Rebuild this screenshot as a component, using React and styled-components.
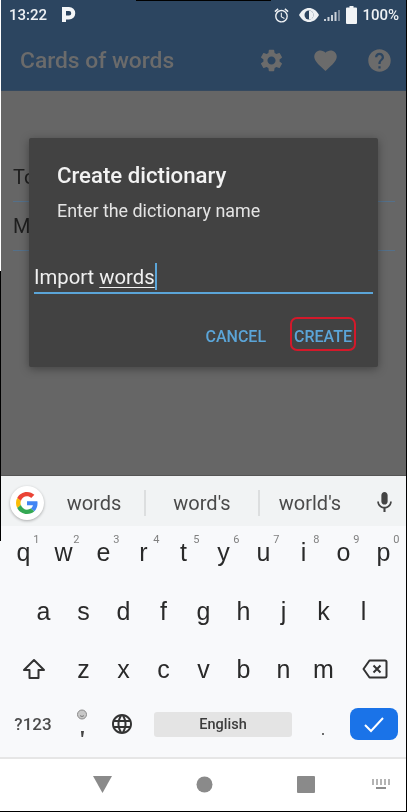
import React from 'react'
import styled, { createGlobalStyle } from 'styled-components'
import { MdSettings, MdFavorite, MdHelp, MdMic, MdLanguage, MdAccessAlarm } from 'react-icons/md'

const Global = createGlobalStyle`
    html, body {
        margin: 0;
        padding: 0;
        background: #ffffff;
    }
    body {
        font-family: Roboto, "Liberation Sans", sans-serif;
    }
`;

const Screen = styled.div`
    position: relative;
    width: 407px;
    height: 812px;
    display: flex;
    flex-direction: column;
    overflow: hidden;
    filter: blur(.45px);
`;

// scraps of the screenshot's frame, they sit over the page edges
const TopScrap = styled.div`
    position: absolute;
    top: 0;
    left: 136px;
    width: 135px;
    height: 1px;
    background: #000000;
`;

const LeftScrap = styled.div`
    position: absolute;
    top: ${p => p.$top}px;
    left: 0;
    width: 1px;
    height: ${p => p.$h}px;
    background: ${p => p.$color};
    z-index: 3;
`;

const RightScrap = styled.div`
    position: absolute;
    top: 0;
    right: 0;
    width: 1px;
    height: 100%;
    background: #000000;
    z-index: 3;
`;

const Header = styled.header`
    background: #2c4560;
    height: 91px;
    flex-shrink: 0;
    display: flex;
    flex-direction: column;
    border-bottom: 1px solid #35495f;
    box-sizing: border-box;
`;

const StatusBar = styled.div`
    height: 30px;
    display: flex;
    align-items: center;
    padding: 0 8px 0 9px;
    color: #eef1f4;
    font-size: 15px;
    font-weight: 500;
`;

const StatusLeft = styled.div`
    display: flex;
    align-items: center;
    gap: 14px;
    flex: 1;
`;

const StatusRight = styled.div`
    display: flex;
    align-items: center;
    gap: 5px;
`;

const AlarmSlot = styled.div`
    display: flex;
    margin-right: 4px;
`;

const ToolBar = styled.div`
    flex: 1;
    display: flex;
    align-items: center;
    padding: 0 14px 0 20px;
    color: #6b6b6b;
`;

const Title = styled.div`
    flex: 1;
    font-size: 22.8px;
    font-weight: 500;
`;

const ToolIcons = styled.div`
    display: flex;
    align-items: center;
    gap: 27px;
    font-size: 27px;
    svg { display: block; }
`;

const Content = styled.main`
    position: relative;
    flex: 1;
    background: #666666;
    padding: 74px 12px 0 13px;
    border-bottom: 1px solid #555555;
`;

const Row = styled.div`
    height: 36px;
    margin-bottom: 12px;
    border-bottom: 1px solid #54708a;
    color: #1e1e1e;
    font-size: 20px;
    line-height: 24px;
`;

const Dialog = styled.div`
    position: absolute;
    top: 47px;
    left: 29px;
    width: 349px;
    height: 229px;
    box-sizing: border-box;
    background: #424242;
    border-radius: 2px;
    box-shadow: 0 2px 10px rgba(0, 0, 0, .35);
    display: flex;
    flex-direction: column;
    padding: 24px 5px 0;
`;

const DialogTitle = styled.div`
    margin-left: 23px;
    color: #f2f2f2;
    font-size: 22.2px;
    font-weight: 500;
    line-height: 26px;
`;

const DialogText = styled.div`
    margin: 13px 0 0 23px;
    color: #e4e4e4;
    font-size: 17.9px;
    line-height: 20px;
`;

const Field = styled.div`
    margin-top: 36px;
    height: 29px;
    padding-top: 6px;
    border-bottom: 2px solid #5ba5d8;
    color: #f0f0f0;
    font-size: 20.3px;
    line-height: 29px;
    display: flex;
    align-items: flex-start;
`;

const Word = styled.span`
    text-decoration: underline;
    text-underline-offset: 3px;
    text-decoration-thickness: 1px;
`;

const Caret = styled.span`
    width: 2px;
    height: 27px;
    background: #5ba5d8;
`;

const Actions = styled.div`
    margin-top: 23px;
    display: flex;
    justify-content: flex-end;
    align-items: center;
    gap: 24px;
    padding-right: 17px;
`;

const Action = styled.button`
    background: none;
    border: none;
    padding: 6px 0 0;
    color: #5ba5d8;
    font-family: inherit;
    font-size: 16px;
    font-weight: 500;
    line-height: 24px;
`;

const Marked = styled.div`
    border: 2px solid #d3192a;
    border-radius: 7px;
    padding: 0 2px;
    display: flex;
`;

const Keyboard = styled.section`
    flex-shrink: 0;
    background: #f8f9fb;
    border-bottom: 2px solid #e6e6e6;
    padding-bottom: 7px;
`;

const Suggestions = styled.div`
    height: 47px;
    padding: 3px 10px 0;
    background: #f1f3f4;
    display: flex;
    align-items: center;
    color: #4a4a4a;
    font-size: 20px;
`;

const GoogleBadge = styled.div`
    width: 34px;
    height: 34px;
    flex-shrink: 0;
    border-radius: 50%;
    background: #ffffff;
    box-shadow: 0 1px 3px rgba(0, 0, 0, .3);
    display: flex;
    align-items: center;
    justify-content: center;
`;

const Suggestion = styled.div`
    width: ${p => p.$w}px;
    text-align: center;
    border-right: ${p => p.$last ? 'none' : '2px solid #dcdedf'};
    line-height: 26px;
`;

const Mic = styled.div`
    margin-left: auto;
    font-size: 25px;
    display: flex;
    color: #444444;
`;

const KeyRow = styled.div`
    box-sizing: border-box;
    display: flex;
    justify-content: ${p => p.$start ? 'flex-start' : 'center'};
    align-items: center;
    height: ${p => p.$h || 58}px;
    padding: ${p => p.$pad || '0'};
`;

const Key = styled.div`
    position: relative;
    box-sizing: border-box;
    width: ${p => p.$w || 40}px;
    text-align: center;
    color: #2a2a2a;
    font-family: "Liberation Sans", Arial, sans-serif;
    font-size: 25px;
    line-height: 30px;
    display: flex;
    flex-direction: column;
    align-items: center;
    justify-content: center;
`;

const ShiftKey = styled(Key)`
    padding-left: 4px;
`;

const Hint = styled.span`
    position: absolute;
    top: -3px;
    right: 4px;
    font-family: Roboto, sans-serif;
    font-size: 11px;
    line-height: 12px;
    color: #808080;
`;

const SymbolKey = styled(Key)`
    font-family: Roboto, sans-serif;
    font-size: 17px;
    font-weight: 500;
    color: #4a4a4a;
`;

const PeriodKey = styled(Key)`
    font-size: 18px;
    padding-top: 10px;
    color: #555555;
`;

const SpaceBar = styled.div`
    width: 138px;
    height: 25px;
    margin: 0 11px 0 12px;
    background: #e4e4e4;
    border-radius: 3px;
    display: flex;
    align-items: center;
    justify-content: center;
    color: #3c3c3c;
    font-size: 14.5px;
    font-weight: 500;
`;

const EnterKey = styled.div`
    width: 48px;
    height: 32px;
    margin-left: 7px;
    background: #1a73e8;
    border-radius: 8px;
    display: flex;
    align-items: center;
    justify-content: center;
`;

const NavBar = styled.nav`
    height: 53px;
    box-sizing: border-box;
    flex-shrink: 0;
    background: #ffffff;
    border-bottom: 1px solid #000000;
    display: flex;
    align-items: center;
    justify-content: space-between;
    padding: 0 17px 2px 93px;
`;

const NavButtons = styled.div`
    display: flex;
    align-items: center;
    gap: 84px;
    svg { display: block; }
`;

const NavKeys = styled.div`
    display: flex;
`;

const firstRow = [['q', 1], ['w', 2], ['e', 3], ['r', 4], ['t', 5], ['y', 6], ['u', 7], ['i', 8], ['o', 9], ['p', 0]]

function Parking() {
    return (
        <svg width="15" height="18" viewBox="0 0 15 18">
            <path d="M3 16V3h5a4 4 0 0 1 0 8.500H3" fill="none" stroke="#f4f6f8" strokeWidth="4" />
        </svg>
    )
}

function DataSaver() {
    return (
        <svg width="20" height="16" viewBox="0 0 20 16">
            <path d="M0 8c3-5 6-7 10-7s7 2 10 7c-3 5-6 7-10 7S3 13 0 8z" fill="#eef1f4" />
            <circle cx="10" cy="8" r="4.500" fill="#2c4560" />
            <path d="M10 3.500a4.500 4.500 0 0 1 0 9z" fill="#eef1f4" />
        </svg>
    )
}

function Signal() {
    return (
        <svg width="17" height="13" viewBox="0 0 17 13" fill="#c9d0d8">
            <rect x="0" y="10" width="2" height="2" />
            <rect x="3.500" y="8" width="2" height="4" />
            <rect x="7" y="6" width="2" height="6" />
            <rect x="10.500" y="3" width="2" height="9" />
            <rect x="14" y="1" width="2" height="11" opacity=".5" />
        </svg>
    )
}

function Battery() {
    return (
        <svg width="11" height="18" viewBox="0 0 11 18" fill="#f2f4f6">
            <path d="M3.500 0h4v1.500H10a1 1 0 0 1 1 1V17a1 1 0 0 1-1 1H1a1 1 0 0 1-1-1V2.500a1 1 0 0 1 1-1h2.500z" />
        </svg>
    )
}

function GoogleG() {
    return (
        <svg width="22" height="22" viewBox="0 0 48 48">
            <path fill="#ea4335" d="M24 9.500c3.500 0 6.700 1.200 9.200 3.600l6.900-6.900C35.900 2.400 30.400 0 24 0 14.600 0 6.500 5.400 2.600 13.200l8 6.200C12.500 13.700 17.800 9.500 24 9.500z" />
            <path fill="#4285f4" d="M47 24.500c0-1.600-.2-3.100-.4-4.500H24v9h13c-.6 3-2.300 5.500-4.800 7.200l7.700 6C44.400 38 47 31.800 47 24.500z" />
            <path fill="#fbbc05" d="M10.600 28.600c-.5-1.400-.8-3-.8-4.600s.3-3.200.8-4.600l-8-6.200C.9 16.500 0 20.100 0 24s.9 7.500 2.600 10.800l8-6.200z" />
            <path fill="#34a853" d="M24 48c6.500 0 11.900-2.100 15.900-5.800l-7.700-6c-2.200 1.400-4.900 2.300-8.200 2.300-6.200 0-11.500-4.200-13.400-9.900l-8 6.200C6.500 42.600 14.600 48 24 48z" />
        </svg>
    )
}

function Shift() {
    return (
        <svg width="24" height="22" viewBox="0 0 24 22">
            <path d="M12 2 2 12h5.500v8h9v-8H22z" fill="none" stroke="#333333" strokeWidth="2" strokeLinejoin="round" />
        </svg>
    )
}

function Backspace() {
    return (
        <svg width="26" height="20" viewBox="0 0 26 20">
            <path d="M7.500 1.500H23a1.500 1.500 0 0 1 1.500 1.500v14a1.500 1.500 0 0 1-1.500 1.500H7.500L1.500 10z" fill="none" stroke="#333333" strokeWidth="2" strokeLinejoin="round" />
            <path d="m11.500 6.500 7 7m0-7-7 7" stroke="#333333" strokeWidth="2" />
        </svg>
    )
}

function Emoji() {
    return (
        <svg width="14" height="30" viewBox="0 0 14 30">
            <circle cx="7" cy="5.500" r="4.500" fill="#c8c8c8" stroke="#8a8a8a" strokeWidth="1" />
            <path d="M5 6.500c1 1.200 3 1.200 4 0" fill="none" stroke="#777777" />
            <path d="M6 22h3l-1 6H6.500z" fill="#444444" />
        </svg>
    )
}

function NavKeyboard() {
    return (
        <svg width="18" height="10" viewBox="0 0 18 10" fill="#b4b4b4">
            {[0, 4, 8, 12, 16].map(x => <rect key={x} x={x} y="0" width="2" height="6" />)}
            <rect x="4" y="8" width="10" height="2" fill="#8c8c8c" />
        </svg>
    )
}

export default function App() {
    return (
        <Screen>
            <Global />
            <TopScrap />
            <LeftScrap $top={0} $h={271} $color="#ffffff" />
            <LeftScrap $top={271} $h={270} $color="#000000" />
            <RightScrap />
            <Header>
                <StatusBar>
                    <StatusLeft>
                        13:22
                        <Parking />
                    </StatusLeft>
                    <StatusRight>
                        <AlarmSlot><MdAccessAlarm size={17} /></AlarmSlot>
                        <DataSaver />
                        <Signal />
                        <Battery />
                        100%
                    </StatusRight>
                </StatusBar>
                <ToolBar>
                    <Title>Cards of words</Title>
                    <ToolIcons>
                        <MdSettings />
                        <MdFavorite />
                        <MdHelp />
                    </ToolIcons>
                </ToolBar>
            </Header>
            <Content>
                <Row>To</Row>
                <Row>M</Row>
                <Dialog>
                    <DialogTitle>Create dictionary</DialogTitle>
                    <DialogText>Enter the dictionary name</DialogText>
                    <Field>
                        Import&nbsp;<Word>words</Word><Caret />
                    </Field>
                    <Actions>
                        <Action>CANCEL</Action>
                        <Marked><Action>CREATE</Action></Marked>
                    </Actions>
                </Dialog>
            </Content>
            <Keyboard>
                <Suggestions>
                    <GoogleBadge><GoogleG /></GoogleBadge>
                    <Suggestion $w={100}>words</Suggestion>
                    <Suggestion $w={112}>word's</Suggestion>
                    <Suggestion $w={100} $last>world's</Suggestion>
                    <Mic><MdMic /></Mic>
                </Suggestions>
                <KeyRow $h={56} $pad="0 0 4px">
                    {firstRow.map(([letter, hint]) => (
                        <Key key={letter}>{letter}<Hint>{hint}</Hint></Key>
                    ))}
                </KeyRow>
                <KeyRow>
                    {'asdfghjkl'.split('').map(letter => <Key key={letter}>{letter}</Key>)}
                </KeyRow>
                <KeyRow>
                    <ShiftKey $w={63}><Shift /></ShiftKey>
                    {'zxcvbnm'.split('').map(letter => <Key key={letter}>{letter}</Key>)}
                    <Key $w={63}><Backspace /></Key>
                </KeyRow>
                <KeyRow $h={52} $start $pad="0 0 0 4px">
                    <SymbolKey $w={58}>?123</SymbolKey>
                    <Key><Emoji /></Key>
                    <Key><MdLanguage size={24} color="#333333" /></Key>
                    <SpaceBar>English</SpaceBar>
                    <PeriodKey>.</PeriodKey>
                    <EnterKey>
                        <svg width="22" height="18" viewBox="0 0 22 18">
                            <path d="m2 10 6 6L20 3" fill="none" stroke="#ffffff" strokeWidth="2" />
                        </svg>
                    </EnterKey>
                </KeyRow>
            </Keyboard>
            <NavBar>
                <NavButtons>
                    <svg width="19" height="17" viewBox="0 0 19 17"><path d="M0 0h19L9.500 17z" fill="#8a8a8a" /></svg>
                    <svg width="17" height="17" viewBox="0 0 17 17"><circle cx="8.500" cy="8.500" r="8" fill="#8a8a8a" /></svg>
                    <svg width="18" height="17" viewBox="0 0 18 17"><rect width="18" height="17" rx="1" fill="#8a8a8a" /></svg>
                </NavButtons>
                <NavKeys><NavKeyboard /></NavKeys>
            </NavBar>
        </Screen>
    )
}
